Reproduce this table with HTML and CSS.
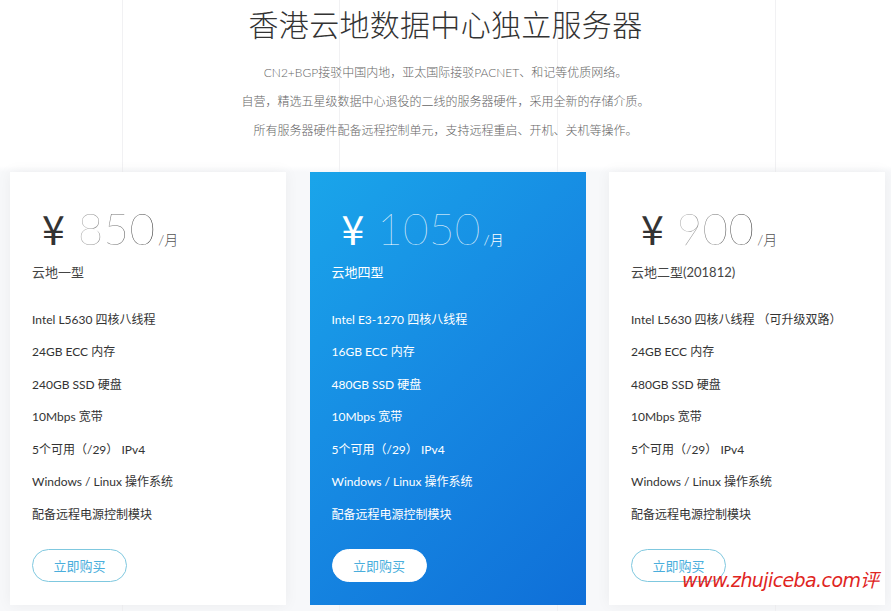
FILE: index.html
```html
<!DOCTYPE html>
<html lang="zh-CN">
<head>
<meta charset="utf-8">
<title>香港云地数据中心独立服务器</title>
<link rel="stylesheet" href="styles.css">
</head>
<body>
<div class="page">
  <header class="hero">
    <h1 class="hero-title">香港云地数据中心独立服务器</h1>
    <div class="hero-desc">
      <p>CN2+BGP接驳中国内地，亚太国际接驳PACNET、和记等优质网络。</p>
      <p>自营，精选五星级数据中心退役的二线的服务器硬件，采用全新的存储介质。</p>
      <p>所有服务器硬件配备远程控制单元，支持远程重启、开机、关机等操作。</p>
    </div>
  </header>

  <section class="plans">
    <div class="card">
      <div class="price"><span class="yen">¥</span><span class="num">850</span><span class="unit">/月</span></div>
      <div class="name">云地一型</div>
      <ul class="specs">
        <li>Intel L5630 四核八线程</li>
        <li>24GB ECC 内存</li>
        <li>240GB SSD 硬盘</li>
        <li>10Mbps 宽带</li>
        <li>5个可用（/29） IPv4</li>
        <li>Windows / Linux 操作系统</li>
        <li>配备远程电源控制模块</li>
      </ul>
      <a class="buy" href="#">立即购买</a>
    </div>

    <div class="card card-featured">
      <div class="price"><span class="yen">¥</span><span class="num">1050</span><span class="unit">/月</span></div>
      <div class="name">云地四型</div>
      <ul class="specs">
        <li>Intel E3-1270 四核八线程</li>
        <li>16GB ECC 内存</li>
        <li>480GB SSD 硬盘</li>
        <li>10Mbps 宽带</li>
        <li>5个可用（/29） IPv4</li>
        <li>Windows / Linux 操作系统</li>
        <li>配备远程电源控制模块</li>
      </ul>
      <a class="buy" href="#">立即购买</a>
    </div>

    <div class="card">
      <div class="price"><span class="yen">¥</span><span class="num">900</span><span class="unit">/月</span></div>
      <div class="name">云地二型(201812)</div>
      <ul class="specs">
        <li>Intel L5630 四核八线程 （可升级双路）</li>
        <li>24GB ECC 内存</li>
        <li>480GB SSD 硬盘</li>
        <li>10Mbps 宽带</li>
        <li>5个可用（/29） IPv4</li>
        <li>Windows / Linux 操作系统</li>
        <li>配备远程电源控制模块</li>
      </ul>
      <a class="buy" href="#">立即购买</a>
    </div>

    <div class="watermark">www.zhujiceba.com评</div>
  </section>
</div>
</body>
</html>
```

FILE: styles.css
```css
* { box-sizing: border-box; }

html, body {
  margin: 0;
  padding: 0;
}

body {
  font-family: Lato, "Noto Sans CJK SC", "Noto Sans", sans-serif;
  color: #333;
  background: #fff;
  width: 891px;
  height: 611px;
  overflow: hidden;
}

.page {
  height: 611px;
  background:
    linear-gradient(#f1f1f3, #f1f1f3) 122px 0 / 1px 100% no-repeat,
    linear-gradient(#f1f1f3, #f1f1f3) 339px 0 / 1px 100% no-repeat,
    linear-gradient(#f1f1f3, #f1f1f3) 557px 0 / 1px 100% no-repeat,
    linear-gradient(#f1f1f3, #f1f1f3) 775px 0 / 1px 100% no-repeat,
    linear-gradient(#fff 0, #fff 166px, #f7f8fa 172px) 0 0 / 100% 100% no-repeat;
}

.hero {
  padding-top: 5px;
  text-align: center;
}

.hero-title {
  margin: 0;
  font-family: "Noto Sans CJK SC", sans-serif;
  font-weight: 300;
  font-size: 30px;
  line-height: 36px;
  color: #333;
  letter-spacing: 0.3px;
}

.hero-desc {
  margin-top: 17px;
}

.hero-desc p {
  margin: 0;
  font-size: 12px;
  line-height: 29px;
  color: #666;
  font-family: Lato, "Noto Sans CJK SC", sans-serif;
  font-weight: 300;
}

.plans {
  position: relative;
  display: grid;
  grid-template-columns: repeat(3, 276px);
  column-gap: 23.5px;
  padding: 27px 0 0 10px;
}

.card {
  height: 433px;
  padding: 30px 22px 23px;
  background: #fff;
  box-shadow: 0 0 14px rgba(0, 0, 0, 0.05);
  display: flex;
  flex-direction: column;
  align-items: flex-start;
}

.price {
  height: 50px;
  line-height: 50px;
  display: flex;
  align-items: baseline;
  padding-left: 10px;
  white-space: nowrap;
}

.yen {
  font-family: "Noto Sans CJK SC", sans-serif;
  font-weight: 400;
  font-size: 41px;
  color: #333;
}

.num {
  margin-left: 13px;
  font-family: Lato, sans-serif;
  font-weight: 100;
  font-size: 44px;
  letter-spacing: 0.3px;
  background: linear-gradient(90deg, #aaa 0%, #666 50%, #222 100%);
  -webkit-background-clip: text;
  background-clip: text;
  color: transparent;
}

.unit {
  margin-left: 3px;
  font-size: 14px;
  color: #555;
  font-weight: 300;
}

.name {
  margin-top: 10px;
  font-size: 13px;
  line-height: 20px;
  color: #444;
}

.specs {
  list-style: none;
  margin: 21.75px 0 0;
  padding: 0;
}

.specs li {
  font-size: 12px;
  line-height: 32.5px;
  color: #333;
  white-space: nowrap;
}

.buy {
  margin-top: 17.75px;
  width: 95px;
  height: 33px;
  line-height: 31px;
  border: 1px solid #7fc8df;
  border-radius: 17px;
  text-align: center;
  font-size: 13px;
  color: #4aaedc;
  text-decoration: none;
  font-family: "Noto Sans CJK SC", sans-serif;
}

.card-featured {
  background: linear-gradient(135deg, #1aa5ea 0%, #1688e2 50%, #0f6fd8 100%);
  box-shadow: none;
}

.card-featured .yen,
.card-featured .unit,
.card-featured .name,
.card-featured .specs li {
  color: #fff;
}

.card-featured .num {
  background: none;
  color: #fff;
  -webkit-background-clip: border-box;
  background-clip: border-box;
}

.card-featured .buy {
  background: #fff;
  border-color: #fff;
  color: #4aaedc;
}

.watermark {
  position: absolute;
  left: 682px;
  top: 423px;
  font-family: "DejaVu Sans", sans-serif;
  font-style: italic;
  font-size: 19px;
  line-height: 24px;
  color: #e0251e;
  letter-spacing: -0.6px;
  white-space: nowrap;
}
```
